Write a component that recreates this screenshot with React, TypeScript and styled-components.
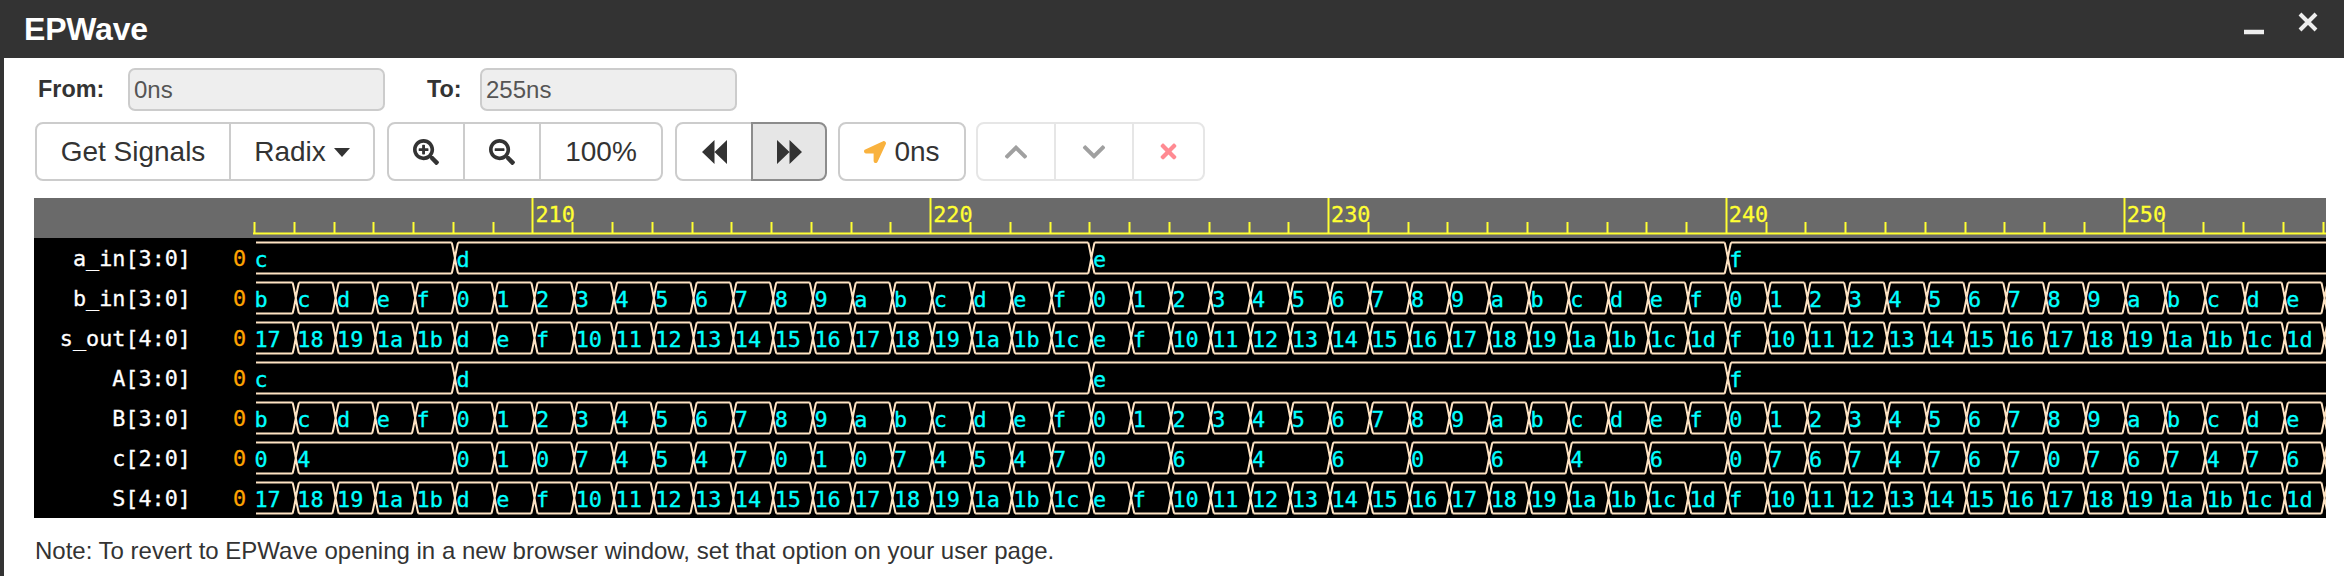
import React from "react"
import styled, { createGlobalStyle } from "styled-components"
import { FaSearchPlus, FaSearchMinus, FaLocationArrow, FaChevronUp, FaChevronDown, FaTimes } from "react-icons/fa"

const GlobalStyle = createGlobalStyle`
  html, body {
    margin: 0;
    padding: 0;
    background: #fff;
  }
  body {
    font-family: "Liberation Sans", Arial, sans-serif;
    color: #333;
  }
`

const Window = styled.div`
  width: 2344px;
  height: 576px;
  box-sizing: border-box;
  border-left: 4px solid #333;
  overflow: hidden;
  display: flex;
  flex-direction: column;
  background: #fff;
`

const TitleBar = styled.div`
  height: 58px;
  flex: none;
  margin-left: -4px;
  padding: 0 26px 0 24px;
  background: #333;
  display: flex;
  align-items: center;
  justify-content: space-between;
`

const Title = styled.div`
  color: #fff;
  font-size: 32px;
  font-weight: bold;
  letter-spacing: -0.2px;
`

const WindowControls = styled.div`
  display: flex;
  gap: 34px;
  align-items: flex-start;
  height: 34px;

  svg {
    display: block;
  }
`

const Body = styled.div`
  padding-left: 30px;
  width: 2292px;
  display: flex;
  flex-direction: column;
`

const RangeRow = styled.div`
  margin-top: 10px;
  height: 43px;
  display: flex;
  align-items: center;
`

const RangeLabel = styled.label<{ $width: number }>`
  width: ${(p) => p.$width}px;
  padding-left: 4px;
  box-sizing: border-box;
  font-size: 23.4px;
  font-weight: bold;
  color: #333;
`

const RangeInput = styled.input`
  width: 257px;
  height: 43px;
  box-sizing: border-box;
  padding: 0 4px;
  margin-right: 38px;
  border: 2px solid #ccc;
  border-radius: 7px;
  background: #eee;
  color: #555;
  font-family: "Liberation Sans", Arial, sans-serif;
  font-size: 24px;
`

const Toolbar = styled.div`
  margin-top: 11px;
  height: 59px;
  padding-left: 1px;
  display: flex;
`

const ButtonGroup = styled.div<{ $gap?: number }>`
  display: flex;
  margin-right: ${(p) => p.$gap ?? 12}px;
`

const ToolButton = styled.button<{ $width: number; $active?: boolean; $faded?: boolean }>`
  width: ${(p) => p.$width}px;
  height: 59px;
  box-sizing: border-box;
  margin: 0 0 0 -2px;
  padding: 0;
  display: flex;
  align-items: center;
  justify-content: center;
  gap: 8px;
  position: relative;
  z-index: ${(p) => (p.$active ? 1 : 0)};
  border: 2px solid ${(p) => (p.$active ? "#8c8c8c" : p.$faded ? "#e6e6e6" : "#ccc")};
  background: ${(p) => (p.$active ? "#e6e6e6" : "#fff")};
  color: #333;
  font-family: "Liberation Sans", Arial, sans-serif;
  font-size: 28px;

  &:first-child {
    margin-left: 0;
    border-radius: 8px 0 0 8px;
  }
  &:last-child {
    border-radius: 0 8px 8px 0;
  }
  &:only-child {
    border-radius: 8px;
  }
`

const Caret = styled.span`
  width: 0;
  height: 0;
  border-left: 8.5px solid transparent;
  border-right: 8.5px solid transparent;
  border-top: 9px solid #333;
  margin-top: 2px;
`

const WaveCanvas = styled.div`
  margin-top: 17px;
  width: 2292px;
  background: #000;
`

const RulerBar = styled.div`
  height: 40px;
  background: #6a6a6a;
  display: flex;
  justify-content: flex-end;
`

const TraceRow = styled.div`
  height: 40px;
  display: flex;
`

const SignalName = styled.div`
  width: 157px;
  padding-top: 1px;
  text-align: right;
  color: #fff;
  font-family: "DejaVu Sans Mono", monospace;
  font-size: 21.8px;
  line-height: 40px;
  white-space: pre;
  -webkit-text-stroke: 0.3px #fff;
`

const CursorValue = styled.div`
  width: 59px;
  padding-top: 1px;
  padding-right: 4px;
  box-sizing: border-box;
  text-align: right;
  color: #ffa500;
  font-family: "DejaVu Sans Mono", monospace;
  font-size: 21.8px;
  line-height: 40px;
  -webkit-text-stroke: 0.3px #ffa500;
`

const TraceSvg = styled.svg`
  display: block;
  flex: none;
`

const TraceText = styled.text`
  fill: #00ffff;
  stroke: #00ffff;
  stroke-width: 0.3px;
  font-family: "DejaVu Sans Mono", monospace;
  font-size: 21.8px;
`

const RulerText = styled.text`
  fill: #ffff33;
  stroke: #ffff33;
  stroke-width: 0.3px;
  font-family: "DejaVu Sans Mono", monospace;
  font-size: 21.8px;
`

const Note = styled.p`
  margin: 20px 0 0;
  padding-left: 1px;
  font-size: 24px;
  line-height: 26px;
  color: #333;
  white-space: nowrap;
`

// trace svg starts at x=250 on the page, first sample (203ns) at x=256
const SVG_LEFT = 6
const NS_PX = 39.78
const START_NS = 203
const END_NS = 255
const xOf = (ns: number) => SVG_LEFT + (ns - START_NS) * NS_PX
const TRACE_W = 2076

type Segment = { from: number; to: number; label: string }

const hex = (n: number) => n.toString(16)

const aSegments: Segment[] = [
  { from: 203, to: 208, label: "c" },
  { from: 208, to: 224, label: "d" },
  { from: 224, to: 240, label: "e" },
  { from: 240, to: 255, label: "f" },
]

const perNs = (fn: (ns: number) => number): Segment[] => {
  const out: Segment[] = []
  for (let ns = START_NS; ns < END_NS; ns++) {
    out.push({ from: ns, to: ns + 1, label: hex(fn(ns)) })
  }
  return out
}

const bSegments = perNs((ns) => (ns - 192) % 16)

const sSegments = perNs((ns) => {
  if (ns < 208) return 0x17 + (ns - 203)
  if (ns < 224) return 0xd + (ns - 208)
  if (ns < 240) return 0xe + (ns - 224)
  return 0xf + (ns - 240)
})

const cValues: [number, string][] = [
  [203, "0"], [204, "4"], [208, "0"], [209, "1"], [210, "0"], [211, "7"], [212, "4"], [213, "5"],
  [214, "4"], [215, "7"], [216, "0"], [217, "1"], [218, "0"], [219, "7"], [220, "4"], [221, "5"],
  [222, "4"], [223, "7"], [224, "0"], [226, "6"], [228, "4"], [230, "6"], [232, "0"], [234, "6"],
  [236, "4"], [238, "6"], [240, "0"], [241, "7"], [242, "6"], [243, "7"], [244, "4"], [245, "7"],
  [246, "6"], [247, "7"], [248, "0"], [249, "7"], [250, "6"], [251, "7"], [252, "4"], [253, "7"],
  [254, "6"],
]

const cSegments: Segment[] = cValues.map(([from, label], i) => ({
  from,
  to: i + 1 < cValues.length ? cValues[i + 1][0] : END_NS,
  label,
}))

const signals = [
  { name: "a_in[3:0]", segments: aSegments },
  { name: "b_in[3:0]", segments: bSegments },
  { name: "s_out[4:0]", segments: sSegments },
  { name: "A[3:0]", segments: aSegments },
  { name: "B[3:0]", segments: bSegments },
  { name: "c[2:0]", segments: cSegments },
  { name: "S[4:0]", segments: sSegments },
]

const TOP = 4.5
const BOTTOM = 35.5
const SLOPE = 3.2

const tracePath = (segments: Segment[]) => {
  let d = ""
  segments.forEach((seg, i) => {
    const x0 = i === 0 ? xOf(seg.from) : xOf(seg.from) + SLOPE
    // a value that holds past the last sample runs off the edge, no crossing
    const holds = i === segments.length - 1 && seg.to - seg.from > 1
    const x1 = holds ? TRACE_W : xOf(seg.to) - SLOPE
    d += `M${x0} ${TOP}H${x1}M${x0} ${BOTTOM}H${x1}`
    if (holds) return
    const c = xOf(seg.to)
    d += `M${x1} ${TOP}C${c - 1} ${TOP + 8} ${c + 1} ${BOTTOM - 8} ${c + SLOPE} ${BOTTOM}`
    d += `M${x1} ${BOTTOM}C${c - 1} ${BOTTOM - 8} ${c + 1} ${TOP + 8} ${c + SLOPE} ${TOP}`
  })
  return d
}

const Trace = ({ segments }: { segments: Segment[] }) => (
  <TraceSvg width={TRACE_W} height={40} viewBox={`0 0 ${TRACE_W} 40`}>
    <path d={tracePath(segments)} fill="none" stroke="#ffe4c4" strokeWidth={2} />
    {segments.map((seg, i) => (
      <TraceText key={seg.from} x={i === 0 ? xOf(seg.from) - 1.5 : xOf(seg.from) + 1.5} y={28.5}>
        {seg.label}
      </TraceText>
    ))}
  </TraceSvg>
)

const Ruler = () => {
  const ticks: number[] = []
  for (let ns = START_NS; ns <= END_NS; ns++) ticks.push(ns)
  return (
    <TraceSvg width={TRACE_W} height={40} viewBox={`0 0 ${TRACE_W} 40`}>
      <path d={`M${xOf(START_NS) - 3} 35.5H${TRACE_W}`} stroke="#ffff33" strokeWidth={2} fill="none" />
      {ticks.map((ns) => {
        const x = Math.round(xOf(ns) - 2) + 0.5
        const major = ns % 10 === 0
        return <path key={ns} d={`M${x} ${major ? 0 : 24}V36`} stroke="#ffff33" strokeWidth={2} fill="none" />
      })}
      {ticks
        .filter((ns) => ns % 10 === 0)
        .map((ns) => (
          <RulerText key={ns} x={xOf(ns) + 1} y={24}>
            {ns}
          </RulerText>
        ))}
    </TraceSvg>
  )
}

const BackwardIcon = () => (
  <svg width="25" height="24" viewBox="0 0 25 24">
    <path d="M0 12 12.5 0V24ZM12.5 12 25 0V24Z" fill="#333" />
  </svg>
)

const ForwardIcon = () => (
  <svg width="25" height="24" viewBox="0 0 25 24">
    <path d="M25 12 12.5 0V24ZM12.5 12 0 0V24Z" fill="#333" />
  </svg>
)

export default function App() {
  return (
    <>
      <GlobalStyle />
      <Window>
        <TitleBar>
          <Title>EPWave</Title>
          <WindowControls>
            <svg width="20" height="34" viewBox="0 0 20 34">
              <path d="M0 20H20" stroke="#eee" strokeWidth="4.5" />
            </svg>
            <svg width="20" height="20" viewBox="0 0 20 20">
              <path d="M2 2 18 18M18 2 2 18" stroke="#eee" strokeWidth="4" />
            </svg>
          </WindowControls>
        </TitleBar>
        <Body>
          <RangeRow>
            <RangeLabel $width={94}>From:</RangeLabel>
            <RangeInput readOnly value="0ns" />
            <RangeLabel $width={57}>To:</RangeLabel>
            <RangeInput readOnly value="255ns" />
          </RangeRow>
          <Toolbar>
            <ButtonGroup>
              <ToolButton $width={196}>Get Signals</ToolButton>
              <ToolButton $width={146}>
                Radix
                <Caret />
              </ToolButton>
            </ButtonGroup>
            <ButtonGroup>
              <ToolButton $width={78}>
                <FaSearchPlus size={26} />
              </ToolButton>
              <ToolButton $width={78}>
                <FaSearchMinus size={26} />
              </ToolButton>
              <ToolButton $width={124}>100%</ToolButton>
            </ButtonGroup>
            <ButtonGroup $gap={11}>
              <ToolButton $width={78}>
                <BackwardIcon />
              </ToolButton>
              <ToolButton $width={76} $active>
                <ForwardIcon />
              </ToolButton>
            </ButtonGroup>
            <ButtonGroup $gap={10}>
              <ToolButton $width={128}>
                <FaLocationArrow size={22} color="#f9b23e" />
                0ns
              </ToolButton>
            </ButtonGroup>
            <ButtonGroup>
              <ToolButton $width={80} $faded>
                <FaChevronUp size={26} color="#a0a0a0" />
              </ToolButton>
              <ToolButton $width={80} $faded>
                <FaChevronDown size={26} color="#a0a0a0" />
              </ToolButton>
              <ToolButton $width={73} $faded>
                <FaTimes size={23} color="#ff8a92" />
              </ToolButton>
            </ButtonGroup>
          </Toolbar>
          <WaveCanvas>
            <RulerBar>
              <Ruler />
            </RulerBar>
            {signals.map((sig) => (
              <TraceRow key={sig.name}>
                <SignalName>{sig.name}</SignalName>
                <CursorValue>0</CursorValue>
                <Trace segments={sig.segments} />
              </TraceRow>
            ))}
          </WaveCanvas>
          <Note>Note: To revert to EPWave opening in a new browser window, set that option on your user page.</Note>
        </Body>
      </Window>
    </>
  )
}
